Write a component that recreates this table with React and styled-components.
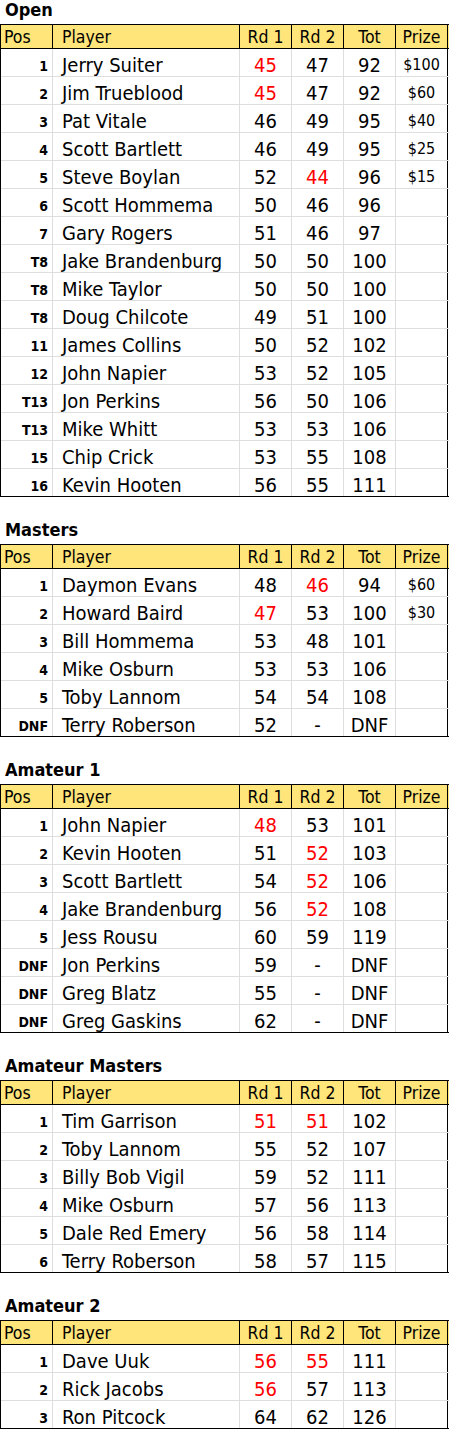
import React from 'react';
import styled, { createGlobalStyle } from 'styled-components';

const GlobalStyle = createGlobalStyle`
  body {
    margin: 0;
    background: #fff;
    color: #000;
    font-family: "DejaVu Sans Condensed", "DejaVu Sans", sans-serif;
    font-stretch: condensed;
  }
`;

const COLS = '52px 187px 52px 52px 52px 52px';
const GRID = '#dedede';
const GOLD = '#ffe57a';

const Page = styled.div`
  width: 449px;
`;

const Section = styled.section`
  & + & {
    margin-top: 23px;
  }
`;

const Title = styled.h2`
  margin: 0;
  height: 24px;
  padding-left: 5px;
  box-sizing: border-box;
  display: flex;
  align-items: flex-end;
  font-size: 18px;
  line-height: 18px;
  padding-bottom: 5px;
  font-weight: bold;
`;

const Table = styled.div`
  width: 448px;
  border-top: 1px solid #000;
  border-left: 1px solid #000;
`;

const HeaderRow = styled.div`
  display: grid;
  grid-template-columns: ${COLS};
  height: 24px;
  box-sizing: border-box;
  background: ${GOLD};
  border-bottom: 1px solid #000;
`;

const HeadCell = styled.div`
  border-right: 1px solid #000;
  display: flex;
  align-items: flex-end;
  justify-content: ${p => (p.$left ? 'flex-start' : 'center')};
  padding-left: ${p => p.$indent || 0}px;
  padding-bottom: 2px;
  font-size: 17.5px;
  line-height: 18px;
  white-space: nowrap;
  overflow: hidden;
`;

const Row = styled.div`
  display: grid;
  grid-template-columns: ${COLS};
  height: 28px;
  box-sizing: border-box;
  border-bottom: 1px solid ${GRID};

  &:last-child {
    border-bottom-color: #000;
  }
`;

const Cell = styled.div`
  border-right: 1px solid ${GRID};
  display: flex;
  align-items: flex-end;
  padding-bottom: 1px;
  font-size: 20px;
  line-height: 20px;
  white-space: nowrap;
  overflow: hidden;

  &:last-child {
    border-right-color: #000;
  }
`;

const PosCell = styled(Cell)`
  justify-content: flex-end;
  padding-right: 4px;
  padding-bottom: 3px;
  font-size: 14px;
  line-height: 14px;
  font-weight: bold;
`;

const NameCell = styled(Cell)`
  padding-left: 9px;
`;

const ScoreCell = styled(Cell)`
  justify-content: center;
  color: ${p => (p.$red ? '#ff0000' : '#000')};
`;

const PrizeCell = styled(Cell)`
  justify-content: center;
  font-size: 16px;
  line-height: 18px;
  padding-bottom: 2px;
  &:last-child {
    border-right-color: #000;
  }
`;

// r = red score
const sections = [
  {
    title: 'Open',
    rows: [
      ['1', 'Jerry Suiter', '45r', '47', '92', '$100'],
      ['2', 'Jim Trueblood', '45r', '47', '92', '$60'],
      ['3', 'Pat Vitale', '46', '49', '95', '$40'],
      ['4', 'Scott Bartlett', '46', '49', '95', '$25'],
      ['5', 'Steve Boylan', '52', '44r', '96', '$15'],
      ['6', 'Scott Hommema', '50', '46', '96', ''],
      ['7', 'Gary Rogers', '51', '46', '97', ''],
      ['T8', 'Jake Brandenburg', '50', '50', '100', ''],
      ['T8', 'Mike Taylor', '50', '50', '100', ''],
      ['T8', 'Doug Chilcote', '49', '51', '100', ''],
      ['11', 'James Collins', '50', '52', '102', ''],
      ['12', 'John Napier', '53', '52', '105', ''],
      ['T13', 'Jon Perkins', '56', '50', '106', ''],
      ['T13', 'Mike Whitt', '53', '53', '106', ''],
      ['15', 'Chip Crick', '53', '55', '108', ''],
      ['16', 'Kevin Hooten', '56', '55', '111', ''],
    ],
  },
  {
    title: 'Masters',
    rows: [
      ['1', 'Daymon Evans', '48', '46r', '94', '$60'],
      ['2', 'Howard Baird', '47r', '53', '100', '$30'],
      ['3', 'Bill Hommema', '53', '48', '101', ''],
      ['4', 'Mike Osburn', '53', '53', '106', ''],
      ['5', 'Toby Lannom', '54', '54', '108', ''],
      ['DNF', 'Terry Roberson', '52', '-', 'DNF', ''],
    ],
  },
  {
    title: 'Amateur 1',
    rows: [
      ['1', 'John Napier', '48r', '53', '101', ''],
      ['2', 'Kevin Hooten', '51', '52r', '103', ''],
      ['3', 'Scott Bartlett', '54', '52r', '106', ''],
      ['4', 'Jake Brandenburg', '56', '52r', '108', ''],
      ['5', 'Jess Rousu', '60', '59', '119', ''],
      ['DNF', 'Jon Perkins', '59', '-', 'DNF', ''],
      ['DNF', 'Greg Blatz', '55', '-', 'DNF', ''],
      ['DNF', 'Greg Gaskins', '62', '-', 'DNF', ''],
    ],
  },
  {
    title: 'Amateur Masters',
    rows: [
      ['1', 'Tim Garrison', '51r', '51r', '102', ''],
      ['2', 'Toby Lannom', '55', '52', '107', ''],
      ['3', 'Billy Bob Vigil', '59', '52', '111', ''],
      ['4', 'Mike Osburn', '57', '56', '113', ''],
      ['5', 'Dale Red Emery', '56', '58', '114', ''],
      ['6', 'Terry Roberson', '58', '57', '115', ''],
    ],
  },
  {
    title: 'Amateur 2',
    rows: [
      ['1', 'Dave Uuk', '56r', '55r', '111', ''],
      ['2', 'Rick Jacobs', '56r', '57', '113', ''],
      ['3', 'Ron Pitcock', '64', '62', '126', ''],
    ],
  },
];

function Score({ value }) {
  const red = value.endsWith('r');
  return <ScoreCell $red={red}>{red ? value.slice(0, -1) : value}</ScoreCell>;
}

function Standings({ title, rows }) {
  return (
    <Section>
      <Title>{title}</Title>
      <Table>
        <HeaderRow>
          <HeadCell $left $indent={3}>Pos</HeadCell>
          <HeadCell $left $indent={9}>Player</HeadCell>
          <HeadCell>Rd 1</HeadCell>
          <HeadCell>Rd 2</HeadCell>
          <HeadCell>Tot</HeadCell>
          <HeadCell>Prize</HeadCell>
        </HeaderRow>
        {rows.map(([pos, name, r1, r2, tot, prize], i) => (
          <Row key={i}>
            <PosCell>{pos}</PosCell>
            <NameCell>{name}</NameCell>
            <Score value={r1} />
            <Score value={r2} />
            <Score value={tot} />
            <PrizeCell>{prize}</PrizeCell>
          </Row>
        ))}
      </Table>
    </Section>
  );
}

export default function App() {
  return (
    <Page>
      <GlobalStyle />
      {sections.map(s => (
        <Standings key={s.title} {...s} />
      ))}
    </Page>
  );
}
